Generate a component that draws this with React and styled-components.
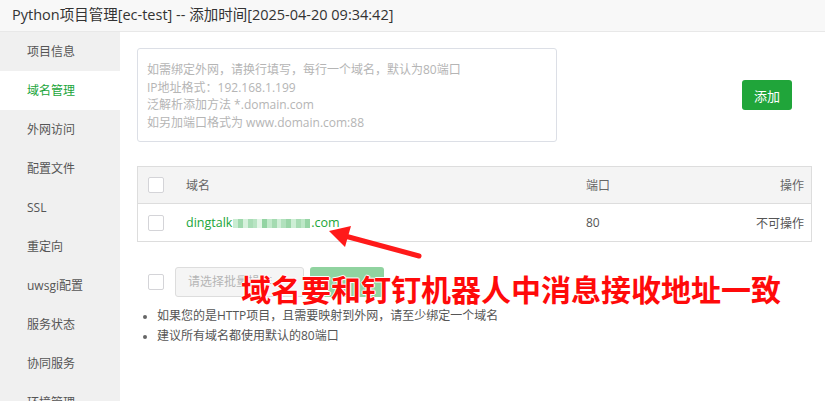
import React from "react";
import styled, { createGlobalStyle } from "styled-components";

const GlobalStyle = createGlobalStyle`
  html, body {
    margin: 0;
    padding: 0;
    background: #fff;
  }
  body {
    font-family: "Open Sans", "Noto Sans CJK SC", sans-serif;
    font-size: 12px;
    color: #555;
  }
  * {
    box-sizing: border-box;
  }
`;

const menu = [
  "项目信息",
  "域名管理",
  "外网访问",
  "配置文件",
  "SSL",
  "重定向",
  "uwsgi配置",
  "服务状态",
  "协同服务",
  "环境管理",
];

const hints = [
  "如需绑定外网，请换行填写，每行一个域名，默认为80端口",
  "IP地址格式：192.168.1.199",
  "泛解析添加方法 *.domain.com",
  "如另加端口格式为 www.domain.com:88",
];

// mosaic over the hidden part of the domain name
const mosaic = [
  "#c9ecd1", "#9fd9ad", "#d7f1dd", "#a9ddb6", "#b8e4c3", "#e3f5e7", "#93d4a3",
  "#c2e9cb", "#a4dbb1", "#d0eed7", "#b1e1bd", "#9ad6a8", "#cdeed5", "#a8dcb4",
  "#bde7c7", "#97d5a6",
];

const App = () => {
  return (
    <Page>
      <GlobalStyle />
      <TitleBar>Python项目管理[ec-test] -- 添加时间[2025-04-20 09:34:42]</TitleBar>
      <Body>
        <Sidebar>
          {menu.map((item) => (
            <MenuItem key={item} $active={item === "域名管理"}>
              {item}
            </MenuItem>
          ))}
        </Sidebar>
        <Main>
          <TopRow>
            <Field>
              {hints.map((line) => (
                <HintLine key={line}>{line}</HintLine>
              ))}
            </Field>
            <AddButton>添加</AddButton>
          </TopRow>

          <Table>
            <HeadRow>
              <Cell>
                <Check />
              </Cell>
              <Cell>域名</Cell>
              <Cell>端口</Cell>
              <Cell $right>操作</Cell>
            </HeadRow>
            <Row>
              <Cell>
                <Check />
              </Cell>
              <Cell>
                <Domain>
                  dingtalk
                  <Mosaic>
                    {mosaic.map((c, i) => (
                      <Pixel key={i} $color={c} />
                    ))}
                  </Mosaic>
                  .com
                </Domain>
              </Cell>
              <Cell>80</Cell>
              <Cell $right>不可操作</Cell>
            </Row>
          </Table>

          <BatchBar>
            <Check />
            <BatchSelect>请选择批量操作</BatchSelect>
            <BatchButton />
          </BatchBar>

          <Tips>
            <li>如果您的是HTTP项目，且需要映射到外网，请至少绑定一个域名</li>
            <li>建议所有域名都使用默认的80端口</li>
          </Tips>
        </Main>
      </Body>

      <Arrow width="825" height="401" viewBox="0 0 825 401">
        <line x1="419" y1="256" x2="345" y2="236" stroke="#ff1a1a" strokeWidth="5" strokeLinecap="round" />
        <polygon points="329,231 351,226 345,247" fill="#ff1a1a" />
      </Arrow>
      <Callout>域名要和钉钉机器人中消息接收地址一致</Callout>
    </Page>
  );
};

export default App;

const Page = styled.div`
  position: relative;
  width: 825px;
  height: 401px;
  overflow: hidden;
`;

const TitleBar = styled.div`
  height: 32px;
  padding-left: 12px;
  line-height: 30px;
  font-size: 14.5px;
  color: #333;
  background: #f8f8f8;
  border-bottom: 1px solid #e8e8e8;
  white-space: nowrap;
`;

const Body = styled.div`
  display: flex;
  height: 369px;
`;

const Sidebar = styled.div`
  width: 120px;
  flex-shrink: 0;
  background: #f0f0f0;
`;

const MenuItem = styled.div`
  height: 39px;
  line-height: 39px;
  padding-left: 27px;
  font-size: 12px;
  color: ${({ $active }) => ($active ? "#20a53a" : "#555")};
  background: ${({ $active }) => ($active ? "#fff" : "transparent")};
`;

const Main = styled.div`
  flex: 1;
  padding: 16px 13px 0 17px;
`;

const TopRow = styled.div`
  display: flex;
  align-items: center;
`;

const Field = styled.div`
  width: 420px;
  height: 94px;
  padding: 12px 9px;
  border: 1px solid #dcdfe6;
  border-radius: 3px;
`;

const HintLine = styled.div`
  line-height: 17.7px;
  color: #b5b5b5;
  white-space: nowrap;
`;

const AddButton = styled.button`
  margin-left: auto;
  margin-right: 20px;
  width: 50px;
  height: 30px;
  border: none;
  border-radius: 3px;
  background: #20a53a;
  color: #fff;
  font-family: inherit;
  font-size: 13px;
  padding: 0;
`;

const Table = styled.div`
  margin-top: 24px;
  border: 1px solid #ddd;
`;

const HeadRow = styled.div`
  display: grid;
  grid-template-columns: 48px 400px 1fr auto;
  align-items: center;
  height: 37px;
  background: #f4f4f4;
  border-bottom: 1px solid #ddd;
  color: #666;
`;

const Row = styled(HeadRow)`
  height: 37px;
  background: #fff;
  border-bottom: none;
  color: #555;
`;

const Cell = styled.div`
  display: flex;
  align-items: center;
  padding-right: ${({ $right }) => ($right ? "7px" : "0")};
  justify-content: ${({ $right }) => ($right ? "flex-end" : "flex-start")};
  &:first-child {
    padding-left: 10px;
  }
`;

const Check = styled.span`
  display: inline-block;
  width: 16px;
  height: 16px;
  border: 1px solid #d4d4d8;
  border-radius: 2px;
  background: #fff;
`;

const Domain = styled.span`
  display: inline-flex;
  align-items: center;
  color: #20a53a;
  font-size: 12.5px;
`;

const Mosaic = styled.span`
  display: inline-flex;
  align-items: center;
  height: 10px;
  margin: 2px 1px 0 1px;
`;

const Pixel = styled.span`
  width: 4.8px;
  height: 9px;
  background: ${({ $color }) => $color};
`;

const BatchBar = styled.div`
  display: flex;
  align-items: center;
  margin-top: 25px;
  padding-left: 11px;
  & > span {
    margin-right: 11px;
  }
`;

const BatchSelect = styled.div`
  width: 129px;
  height: 30px;
  line-height: 28px;
  padding-left: 12px;
  border: 1px solid #ddd;
  border-radius: 3px;
  background: #f5f5f5;
  color: #b5b5b5;
  overflow: hidden;
  white-space: nowrap;
`;

const BatchButton = styled.div`
  width: 74px;
  height: 30px;
  margin-left: 6px;
  border-radius: 3px;
  background: #90d3a0;
`;

const Tips = styled.ul`
  margin: 9px 0 0;
  padding-left: 20px;
  color: #555;
  li {
    line-height: 20px;
  }
  li::marker {
    color: #666;
    font-size: 10px;
  }
`;

const Arrow = styled.svg`
  position: absolute;
  left: 0;
  top: 0;
  pointer-events: none;
`;

const Callout = styled.div`
  position: absolute;
  left: 241px;
  top: 273px;
  font-family: "Noto Sans CJK SC", sans-serif;
  font-size: 30px;
  font-weight: 700;
  line-height: 30px;
  color: #ff0a0a;
  white-space: nowrap;
  text-shadow: 1px 0 0 #fff, -1px 0 0 #fff, 0 1px 0 #fff, 0 -1px 0 #fff;
`;
